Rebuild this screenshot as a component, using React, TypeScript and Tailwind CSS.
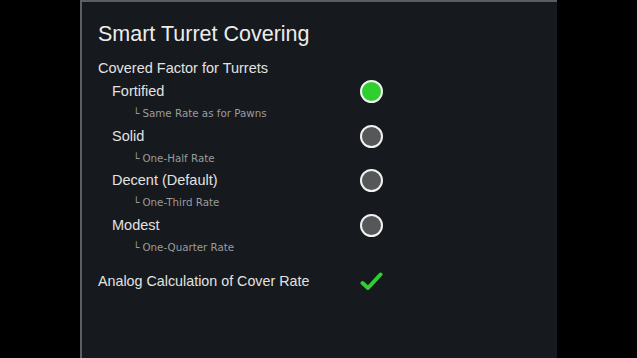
import React from 'react';

const OPTIONS = [
  { label: 'Fortified', note: 'Same Rate as for Pawns', selected: true },
  { label: 'Solid', note: 'One-Half Rate', selected: false },
  { label: 'Decent (Default)', note: 'One-Third Rate', selected: false },
  { label: 'Modest', note: 'One-Quarter Rate', selected: false },
];

const Radio = ({ on }: { on: boolean }) => (
  <div
    className={`w-[23px] h-[23px] rounded-full border-2 border-[#f2f2f2] ${on ? 'bg-[#2fcf2f]' : 'bg-[#565758]'}`}
  />
);

export default function App() {
  return (
    <div className="w-[637px] h-[358px] bg-black flex overflow-hidden" style={{ fontFamily: '"Liberation Sans", Arial, sans-serif' }}>
      <div className="ml-[80px] w-[477px] h-full bg-[#16191d] border-l-2 border-t-2 border-[#5b5e62] pl-[16px] pt-[19px]">
        <h1 className="text-[21.5px] leading-[26px] text-[#ececec]">Smart Turret Covering</h1>

        <div className="mt-[11px] w-[285px]">
          <div className="text-[14.5px] leading-[20px] text-[#e2e2e2]">Covered Factor for Turrets</div>

          <div className="mt-[2px]">
            {OPTIONS.map((o) => (
              <div key={o.label} className="flex justify-between h-[44.5px]">
                <div className="pl-[14px]">
                  <div className="text-[14.5px] leading-[22px] text-[#e2e2e2]">{o.label}</div>
                  <div
                    className="pl-[21px] text-[10.3px] leading-[22px] text-[#9b9c9d]"
                    style={{ fontFamily: '"DejaVu Sans", Verdana, sans-serif' }}
                  >
                    └ {o.note}
                  </div>
                </div>
                <div>
                  <Radio on={o.selected} />
                </div>
              </div>
            ))}
          </div>

          <div className="flex justify-between items-center mt-[12px]">
            <div className="text-[14.3px] leading-[22px] text-[#e2e2e2]">Analog Calculation of Cover Rate</div>
            <svg width="23" height="20" viewBox="0 0 23 20">
              <path d="M2.5 12 L8 17 L20.5 3.5" fill="none" stroke="#2fcf2f" strokeWidth="4" strokeLinecap="round" strokeLinejoin="round" />
            </svg>
          </div>
        </div>
      </div>
    </div>
  );
}
